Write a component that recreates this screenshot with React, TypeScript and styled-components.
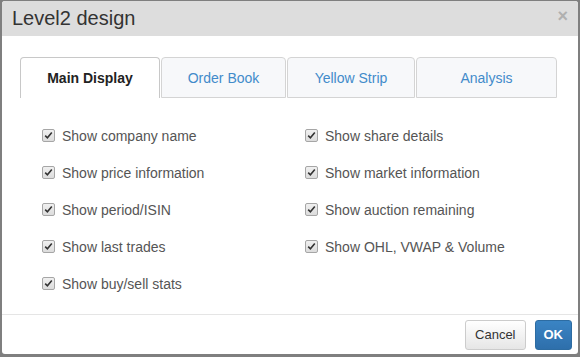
import React from "react";
import styled, { createGlobalStyle } from "styled-components";

const Global = createGlobalStyle`
  html, body { margin: 0; padding: 0; }
  body {
    background: #7f7f7f;
    font-family: "Liberation Sans", Arial, sans-serif;
    width: 580px;
    height: 357px;
    overflow: hidden;
  }
`;

const Dialog = styled.div`
  margin: 1px 0 0 2px;
  width: 576px;
  height: 353px;
  background: #fff;
  border-radius: 3px;
  display: flex;
  flex-direction: column;
  overflow: hidden;
`;

const Header = styled.div`
  height: 35px;
  background: #dddddd;
  display: flex;
  align-items: center;
  justify-content: space-between;
  padding: 0 10px 0 10px;
  flex-shrink: 0;
`;

const Title = styled.div`
  font-size: 20px;
  color: #333;
`;

const Close = styled.div`
  font-size: 18px;
  font-weight: bold;
  color: #b0b0b0;
  margin-top: -6px;
  line-height: 1;
`;

const Body = styled.div`
  flex: 1;
  padding: 21px 20px 0 18px;
`;

const Tabs = styled.div`
  display: flex;
  height: 41px;
  width: 538px;
`;

const Tab = styled.div<{ $active?: boolean; $w: number }>`
  width: ${(p) => p.$w}px;
  box-sizing: border-box;
  display: flex;
  align-items: center;
  justify-content: center;
  font-size: 14px;
  border: 1px solid ${(p) => (p.$active ? "#c8c8c8" : "#d4d4d4")};
  border-bottom: ${(p) => (p.$active ? "none" : "1px solid #d4d4d4")};
  border-radius: 4px 4px 0 0;
  margin-right: 1px;
  background: ${(p) => (p.$active ? "#fff" : "#f7f8fa")};
  color: ${(p) => (p.$active ? "#222" : "#428bca")};
  font-weight: ${(p) => (p.$active ? "bold" : "normal")};
  &:last-child { margin-right: 0; }
`;

const Grid = styled.div`
  display: grid;
  grid-template-columns: 263px 1fr;
  grid-auto-rows: 37px;
  padding: 19px 0 0 22px;
`;

const Item = styled.label`
  display: flex;
  align-items: center;
  gap: 7px;
  font-size: 14px;
  color: #555;
  height: 37px;
`;

const Box = styled.span`
  width: 11px;
  height: 11px;
  border: 1px solid #a6a6a6;
  border-radius: 2px;
  background: linear-gradient(#f0f0f0, #dcdcdc);
  display: flex;
  align-items: center;
  justify-content: center;
`;

const Footer = styled.div`
  height: 39px;
  border-top: 1px solid #e5e5e5;
  display: flex;
  justify-content: flex-end;
  align-items: center;
  gap: 9px;
  padding: 0 6px 0 0;
  flex-shrink: 0;
`;

const Button = styled.button<{ $primary?: boolean }>`
  height: 30px;
  box-sizing: border-box;
  font-family: "Liberation Sans", Arial, sans-serif;
  font-size: 13px;
  border-radius: 3px;
  padding: ${(p) => (p.$primary ? "0 8px" : "0 9px")};
  border: 1px solid ${(p) => (p.$primary ? "#2d6ca2" : "#ccc")};
  background: ${(p) =>
    p.$primary ? "linear-gradient(#3a84c4, #2e6fab)" : "linear-gradient(#fff, #e6e6e6)"};
  color: ${(p) => (p.$primary ? "#fff" : "#333")};
  font-weight: ${(p) => (p.$primary ? "bold" : "normal")};
`;

const Check = () => (
  <Box>
    <svg width="9" height="9" viewBox="0 0 9 9">
      <path d="M1.2 4.6 L3.4 6.8 L7.8 1.6" fill="none" stroke="#333" strokeWidth="1.6" />
    </svg>
  </Box>
);

const tabs = [
  { label: "Main Display", w: 140, active: true },
  { label: "Order Book", w: 125 },
  { label: "Yellow Strip", w: 128 },
  { label: "Analysis", w: 141 },
];

const items = [
  "Show company name",
  "Show share details",
  "Show price information",
  "Show market information",
  "Show period/ISIN",
  "Show auction remaining",
  "Show last trades",
  "Show OHL, VWAP & Volume",
  "Show buy/sell stats",
];

export default function App() {
  return (
    <>
      <Global />
      <Dialog>
        <Header>
          <Title>Level2 design</Title>
          <Close>×</Close>
        </Header>
        <Body>
          <Tabs>
            {tabs.map((t) => (
              <Tab key={t.label} $active={t.active} $w={t.w}>
                {t.label}
              </Tab>
            ))}
          </Tabs>
          <Grid>
            {items.map((i) => (
              <Item key={i}>
                <Check />
                {i}
              </Item>
            ))}
          </Grid>
        </Body>
        <Footer>
          <Button>Cancel</Button>
          <Button $primary>OK</Button>
        </Footer>
      </Dialog>
    </>
  );
}
